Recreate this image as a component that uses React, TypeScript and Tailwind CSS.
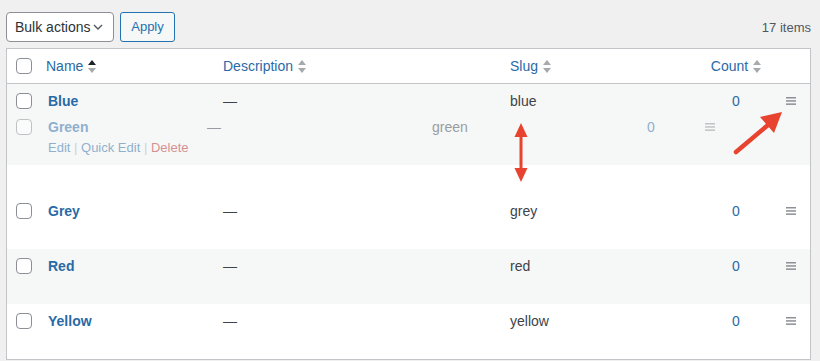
import React from 'react';

const font = { fontFamily: '"Liberation Sans", Arial, sans-serif' };

const SortIcon: React.FC<{ active?: boolean }> = ({ active }) => (
  <svg width="8" height="13" viewBox="0 0 8 13" className="ml-[5px] shrink-0">
    <path d="M4 0 L8 5 L0 5 Z" fill={active ? '#1d2327' : '#a7aaad'} />
    <path d="M4 13 L8 8 L0 8 Z" fill="#a7aaad" />
  </svg>
);

const Handle: React.FC = () => (
  <svg width="10" height="8" viewBox="0 0 10 8">
    <rect x="0" y="0" width="10" height="1.5" fill="#8c8f94" />
    <rect x="0" y="3.2" width="10" height="1.5" fill="#8c8f94" />
    <rect x="0" y="6.4" width="10" height="1.5" fill="#8c8f94" />
  </svg>
);

const Checkbox: React.FC = () => (
  <span className="block w-4 h-4 rounded-[4px] border border-[#8c8f94] bg-white" />
);

interface Term {
  name: string;
  slug: string;
}

const Row: React.FC<{ term: Term; striped: boolean }> = ({ term, striped }) => (
  <div className={`flex h-[55px] items-start pt-[7px] ${striped ? 'bg-[#f6f7f7]' : 'bg-white'}`}>
    <div className="w-[31px] pl-[9px] pt-[2px]">
      <Checkbox />
    </div>
    <div className="w-[177px] pl-[10px] text-[14px] leading-5 font-bold text-[#2a6aa6]">{term.name}</div>
    <div className="w-[287px] pl-2 text-[14px] leading-5 text-[#3c434a]">—</div>
    <div className="w-[198px] pl-2 text-[14px] leading-5 text-[#3c434a]">{term.slug}</div>
    <div className="w-[72px] text-center text-[14px] leading-5 text-[#2a6aa6]">0</div>
    <div className="w-[37px] flex justify-center pt-[6px]">
      <Handle />
    </div>
  </div>
);

export default function App() {
  return (
    <div className="relative w-[820px] h-[361px] overflow-hidden bg-[#f0f0f1]" style={font}>
      <div className="flex items-start h-[48px] pt-[12px] pl-[6px] pr-[9px]">
        <div className="flex items-center w-[108px] h-[30px] px-2 rounded-[4px] border border-[#8c8f94] bg-white text-[14px] text-[#2c3338]">
          <span>Bulk actions</span>
          <svg width="10" height="6" viewBox="0 0 10 6" className="ml-auto mr-[2px]">
            <path d="M1 1 L5 5 L9 1" fill="none" stroke="#50575e" strokeWidth="1.4" />
          </svg>
        </div>
        <button className="ml-[6px] h-[30px] w-[55px] rounded-[3px] border border-[#2271b1] bg-[#f6f7f7] text-[13px] text-[#2271b1]">
          Apply
        </button>
        <div className="ml-auto mt-[6px] text-[13px] text-[#50575e]">17 items</div>
      </div>

      <div className="ml-[6px] w-[805px] border border-[#c3c4c7] bg-white">
        <div className="flex h-[35px] items-center border-b border-[#c3c4c7] bg-white">
          <div className="w-[31px] pl-[9px]">
            <Checkbox />
          </div>
          <div className="w-[177px] pl-2 flex items-center text-[14px] text-[#2a6aa6]">
            Name
            <SortIcon active />
          </div>
          <div className="w-[287px] pl-2 flex items-center text-[14px] text-[#2a6aa6]">
            Description
            <SortIcon />
          </div>
          <div className="w-[198px] pl-2 flex items-center text-[14px] text-[#2a6aa6]">
            Slug
            <SortIcon />
          </div>
          <div className="w-[72px] flex items-center justify-center text-[14px] text-[#2a6aa6]">
            Count
            <SortIcon />
          </div>
          <div className="w-[37px]" />
        </div>

        <div className="relative">
          <Row term={{ name: 'Blue', slug: 'blue' }} striped />
          <div className="h-[55px] bg-white" />
          <Row term={{ name: 'Grey', slug: 'grey' }} striped={false} />
          <Row term={{ name: 'Red', slug: 'red' }} striped />
          <Row term={{ name: 'Yellow', slug: 'yellow' }} striped={false} />

          {/* row being dragged */}
          <div className="absolute left-0 right-0 top-[28px] h-[53px] bg-[#f6f7f7]">
            <div className="flex items-start pt-[5px] opacity-50">
              <div className="w-[31px] pl-[9px] pt-[2px]">
                <Checkbox />
              </div>
              <div className="w-[161px] pl-[10px]">
                <div className="text-[14px] leading-5 font-bold text-[#2a6aa6]">Green</div>
                <div className="mt-[1px] text-[13px] leading-5 text-[#2a6aa6]">
                  Edit <span className="text-[#a7aaad]">|</span> Quick Edit{' '}
                  <span className="text-[#a7aaad]">|</span> <span className="text-[#b32d2e]">Delete</span>
                </div>
              </div>
              <div className="w-[225px] pl-2 text-[14px] leading-5 text-[#3c434a]">—</div>
              <div className="w-[200px] pl-2 text-[14px] leading-5 text-[#3c434a]">green</div>
              <div className="w-[54px] text-center text-[14px] leading-5 text-[#2a6aa6]">0</div>
              <div className="w-[64px] flex justify-center pt-[6px]">
                <Handle />
              </div>
            </div>
          </div>
        </div>
      </div>

      <svg className="absolute left-0 top-0 pointer-events-none" width="820" height="361" viewBox="0 0 820 361">
        <line x1="521" y1="133" x2="521" y2="172" stroke="#e8432e" strokeWidth="3" />
        <path d="M521 123 L527.5 137 L514.5 137 Z" fill="#e8432e" />
        <path d="M521 182 L527.5 168 L514.5 168 Z" fill="#e8432e" />
        <line x1="736" y1="152" x2="768" y2="125" stroke="#e8432e" strokeWidth="4.5" strokeLinecap="round" />
        <path d="M782 112 L774 133 L760 117 Z" fill="#e8432e" />
      </svg>
    </div>
  );
}
